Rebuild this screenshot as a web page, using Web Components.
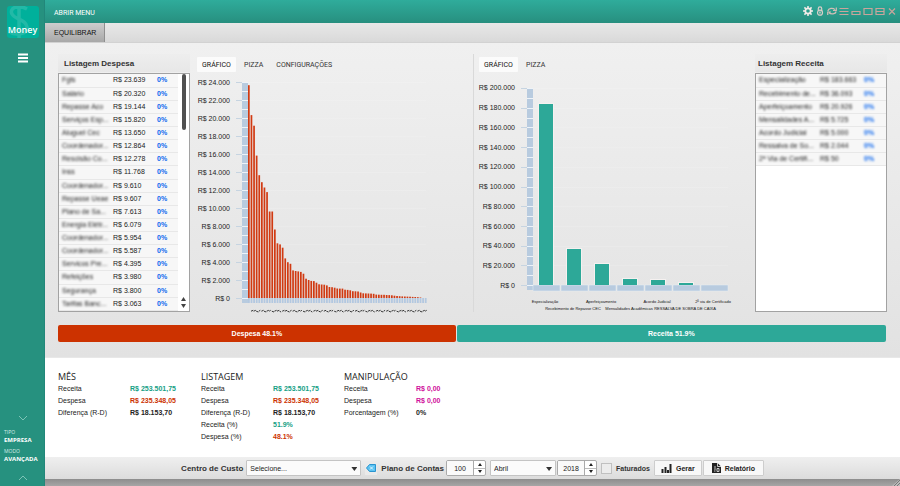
<!DOCTYPE html>
<html lang="pt-BR">
<head>
<meta charset="utf-8">
<title>Money - Equilibrar</title>
<style>
html, body { height: 100%; margin: 0; }
body { font-family: "Liberation Sans", Arial, sans-serif; font-size: 7px; color: #222; }
</style>
</head>
<body>
<money-app></money-app>
<script>
const BASE = `
*, *::before, *::after { box-sizing: border-box; }
button, input, select { font: inherit; color: inherit; margin: 0; padding: 0; border: 0; background: none; }
button { cursor: pointer; }
`;

class Base extends HTMLElement {
  connectedCallback() {
    if (this.shadowRoot) return;
    const t = document.createElement('template');
    t.innerHTML = `<style>${BASE}${this.css()}</style>${this.html()}`;
    this.attachShadow({ mode: 'open' }).append(t.content.cloneNode(true));
  }
  css() { return ''; }
  html() { return ''; }
}

class SideBar extends Base {
  css() { return `
:host { display: flex; flex-direction: column; align-items: center; width: 45px; flex: none; background: #26917f; color: #fff; font-family: "Open Sans", sans-serif; padding-top: 6px; box-shadow: inset -1px 0 #22877a; }
.logo { display: grid; width: 32px; height: 32px; border-radius: 3px; background: #00b09b; overflow: hidden; }
.logo > * { grid-area: 1 / 1; }
.logo span { align-self: end; justify-self: center; font-size: 9px; font-weight: 600; line-height: 17px; }
.menu { margin-top: 14px; width: 12px; height: 12px; display: block; }
svg { display: block; }
.foot { margin-top: auto; align-self: stretch; padding: 0 0 5px 4px; display: flex; flex-direction: column; }
.arrow { align-self: center; width: 10px; height: 6px; margin-right: 4px; }
dl { margin: 7px 0 9px; }
dt { font-size: 5px; line-height: 8px; color: #d5ebe6; }
dd { margin: 0 0 3px; font-size: 6px; line-height: 8px; font-weight: 700; }
`; }
  html() { return `
<div class="logo"><svg width="32" height="32" viewBox="0 0 32 32" aria-hidden="true"><path d="M20 3 C11-2 2 2 5 8 C8 14 19 13 20 21 C21 28 10 30 2 26 M12-2 V34" fill="none" stroke="#22b9a7" stroke-width="3.5"/></svg><span>Money</span></div>
<button class="menu" aria-label="Menu"><svg width="12" height="12" viewBox="0 0 12 12"><path d="M1 2.5h10M1 6h10M1 9.5h10" stroke="#fff" stroke-width="1.8"/></svg></button>
<div class="foot">
<button class="arrow" aria-label="Descer"><svg width="10" height="6"><path d="M1 1l4 4 4-4" fill="none" stroke="#7cc3b6"/></svg></button>
<dl><dt>TIPO</dt><dd>EMPRESA</dd><dt>MODO</dt><dd>AVANÇADA</dd></dl>
<button class="arrow" aria-label="Subir"><svg width="10" height="6"><path d="M1 5l4-4 4 4" fill="none" stroke="#7cc3b6"/></svg></button>
</div>`; }
}
customElements.define('side-bar', SideBar);

class TopBar extends Base {
  css() { return `
:host { display: flex; align-items: center; justify-content: space-between; height: 23px; flex: none; padding: 0 2px 2px 9px; background: linear-gradient(#2fac9b, #278f7f); color: #fff; font-family: Roboto, sans-serif; }
.open { line-height: 10px; padding-top: 4px; }
.tools { display: flex; }
.tools button { width: 12px; height: 12px; display: grid; place-items: center; }
svg { display: block; width: 10px; height: 10px; fill: none; stroke: #c9a59c; stroke-width: 1.2; }
`; }
  html() {
    const icons = {
      'Configurações': '<g stroke="#f3ece9"><circle cx="5" cy="5" r="2.7" stroke-width="1.8"/><path d="M5 0v2M5 8v2M0 5h2M8 5h2M1.4 1.4l1.5 1.5M7.1 7.1l1.5 1.5M1.4 8.6l1.5-1.5M7.1 2.9l1.5-1.5" stroke-width="1.5"/></g>',
      'Bloquear': '<path d="M3.3 5V2.5a1.7 1.7 0 0 1 3.4 0V5" stroke="#d9cfc9"/><circle cx="5" cy="6.7" r="2.5" stroke="#d9cfc9"/><path d="M5 5.6v2" stroke="#e8dcd8"/>',
      'Atualizar': '<path d="M.8 5C1.500 2 6 1.600 8 3.600M9.300 1.500v3H6M9.200 5.500C8.500 8.300 4 8.600 2 6.800M.7 9v-3H4" stroke="#d2beb6"/>',
      'Lista': '<path d="M.5 2.500h9M.5 5.500h9M.5 8.500h9"/>',
      'Minimizar': '<path d="M1 5.500h8v3H1z"/>',
      'Maximizar': '<path d="M1 2.500h8v6H1z"/>',
      'Dividir': '<path d="M1 2.500h8v6H1zM1 5.500h8"/>',
      'Fechar': '<path d="M2 2.500l6 6M8 2.500l-6 6"/>'
    };
    return `<button class="open">ABRIR MENU</button><div class="tools">${Object.entries(icons).map(([n, p]) => `<button aria-label="${n}"><svg viewBox="0 0 10 10">${p}</svg></button>`).join('')}</div>`;
  }
}
customElements.define('top-bar', TopBar);

class PageTabs extends Base {
  css() { return `
:host { display: flex; height: 20px; flex: none; background: linear-gradient(#e8e8e8, #d9d9d9); border-bottom: 1px solid #d2d2d2; }
button { padding: 0 8px 0 9px; background: linear-gradient(#cdcdcd, #a8a8a8); border-right: 1px solid #8f8f8f; color: #111; }
`; }
  html() { return `<button>EQUILIBRAR</button>`; }
}
customElements.define('page-tabs', PageTabs);

class EntryList extends Base {
  css() { return `
:host { display: flex; flex-direction: column; min-width: 0; }
h2 { margin: 0 0 1px; padding-left: 6px; font-size: 8px; line-height: 19px; height: 18px; font-weight: 700; color: #333; background: linear-gradient(#eeeeee, #e7e7e7); }
:host([plain]) h2 { padding-left: 3px; }
.box { flex: 1; display: flex; align-items: stretch; border: 1px solid #a2a2a2; background: #fff; min-height: 0; }
table { flex: 1; border-collapse: collapse; table-layout: fixed; min-width: 0; }
:host([plain]) table { align-self: flex-start; height: 92px; }
td { padding: 0; height: 13px; line-height: 10px; background: #f7f7f7; border-bottom: 1px solid #e8e8e8; white-space: nowrap; color: #222; }
td:first-child { width: 52px; padding-left: 3px; color: #222; }
td:nth-child(2) { width: 46px; padding-left: 2px; }
td:last-child { color: #0b66ee; font-weight: 700; }
:host([plain]) td:first-child { width: 62px; }
td span { display: block; }
.soft { filter: blur(1px); }
.scroll { width: 11px; display: flex; flex-direction: column; justify-content: space-between; align-items: center; }
.thumb { width: 4px; height: 56px; border-radius: 2px; background: #505050; }
svg { display: block; margin-bottom: 3px; }
`; }
  html() {
    const plain = this.hasAttribute('plain');
    const rows = this.getAttribute('rows').split(';').map(r => r.split('|'));
    const soft = plain ? ' class="soft"' : '';
    return `<h2><slot></slot></h2><div class="box"><table>${rows.map(([n, v]) => `<tr><td><span class="soft">${n}</span></td><td><span${soft}>R$ ${v}</span></td><td><span${soft}>0%</span></td></tr>`).join('')}</table>${plain ? '' : '<div class="scroll"><div class="thumb"></div><svg width="7" height="11"><path d="M1 4l2.500-4 2.500 4zM1 7h5l-2.500 4z" fill="#444"/></svg></div>'}</div>`;
  }
}
customElements.define('entry-list', EntryList);

class ChartTabs extends Base {
  css() { return `
:host { display: flex; font-family: Roboto, sans-serif; }
button { height: 15px; padding: 0 5px 0 8px; color: #333; border-radius: 1px; }
button:first-of-type { background: #fbfbfb; color: #111; width: 39px; padding: 0; }
`; }
  html() { return this.getAttribute('items').split(',').map((t, i) => `<button role="tab" aria-selected="${i === 0}">${t}</button>`).join(''); }
}
customElements.define('chart-tabs', ChartTabs);

const axisCss = `
.plot { display: flex; gap: 6px; }
ol { list-style: none; margin: 0; padding: 0; text-align: right; display: flex; flex-direction: column; white-space: nowrap; color: #222; }
li { flex: 1; display: flex; align-items: center; justify-content: flex-end; }
svg { flex: 1; min-width: 0; display: block; overflow: visible; }
`;
const yAxis = (top, bottom, steps, x, right) => {
  const step = (bottom - top) / steps;
  let s = `<rect x="${x}" y="${top}" width="6" height="${bottom - top + 5}" fill="#b8cbdf"/>`;
  for (let i = 0; i <= steps; i++) {
    const y = Math.round(top + i * step);
    s += `<rect x="0" y="${y}" width="${x}" height="1" fill="#c6d4e1"/><rect x="${x}" y="${y}" width="6" height="1" fill="#eef3f8"/>`;
    if (i < steps) s += `<rect x="${x}" y="${Math.round(y + step / 2)}" width="6" height="1" fill="#eef3f8"/><rect x="${x + 6}" y="${y}" width="${right - x - 6}" height="1" fill="#fff" opacity=".14"/>`;
  }
  return s;
};

class ExpenseChart extends Base {
  css() { return `
:host { display: block; padding: 3px 45px 0 7px; min-width: 0; }
.plot { margin-top: 1px; height: 234px; }
ol { width: 33px; }
${axisCss}`; }
  html() {
    const v = [23639,20320,19144,15820,13650,12864,12278,11768,9610,9607,7613,6079,5954,5587,4395,3980,3800,3063,3000,2950,2900,2700,2150,2000,1900,1880,1700,1520,1500,1480,1400,1220,1200,1150,1060,1050,1040,920,900,860,760,740,720,610,520,510,500,490,470,380,370,360,350,330,320,300,260,220,200,180,170,160,140,120,110,90,60,0,0];
    let s = yAxis(9, 225, 12, 6, 190);
    v.forEach((n, i) => {
      const x = 12 + i * 2.6, h = n * 216 / 24000;
      s += `<rect x="${x.toFixed(1)}" y="${(225 - h).toFixed(1)}" width="1.7" height="${h.toFixed(1)}" fill="#d13a12"/><rect x="${x.toFixed(1)}" y="225" width="1.8" height="5" fill="#b3c8e0"/>`;
      if (i) s += `<path d="M${(x + .4).toFixed(1)} 238.2l${i % 4 ? 2.2 : 1.5} ${i % 3 ? -.9 : .8}" stroke="#222" stroke-width=".9"/>`;
    });
    const labels = [];
    for (let n = 24; n >= 0; n -= 2) labels.push(`<li>R$ ${n ? n + '.000' : 0}</li>`);
    return `<chart-tabs items="GRÁFICO,PIZZA,CONFIGURAÇÕES"></chart-tabs><div class="plot"><ol>${labels.join('')}</ol><svg viewBox="0 0 192 234" preserveAspectRatio="none" role="img" aria-label="Despesas">${s}</svg></div>`;
  }
}
customElements.define('expense-chart', ExpenseChart);

class IncomeChart extends Base {
  css() { return `
:host { display: block; padding: 3px 27px 0 5px; min-width: 0; border-left: 1px solid #d9d9d9; }
.plot { margin-top: 6px; height: 217px; }
ol { width: 36px; }
.names { display: grid; grid-template-columns: repeat(7, minmax(0, 1fr)); margin: 3px 1px 0 52px; font-size: 4px; line-height: 7px; color: #111; }
.names span { justify-self: center; white-space: nowrap; }
.names span:nth-child(even) { margin-top: 7px; }
${axisCss}`; }
  html() {
    const v = [183663,36093,20926,5725,5000,2044,50];
    let s = yAxis(10, 207, 10, 6, 207);
    v.forEach((n, i) => {
      const x = 12 + i * 28, h = Math.round(n * 197 / 200000);
      s += `<rect x="${x}" y="207" width="27" height="6" fill="#b8cbdf" stroke="#e8eef4" stroke-width=".5"/>`;
      if (h) s += `<rect x="${x + 5}" y="${206 - h}" width="16" height="${h + 1}" fill="#f5f1f0"/><rect x="${x + 6}" y="${207 - h}" width="14" height="${h}" fill="#2da898"/>`;
    });
    const labels = [];
    for (let n = 200; n >= 0; n -= 20) labels.push(`<li>R$ ${n ? n + '.000' : 0}</li>`);
    const names = ['Especialização','Recebimento de Repasse CEC','Aperfeiçoamento','Mensalidades Acadêmicas','Acordo Judicial','RESSALVA DE SOBRA DE CAIXA','2ª via de Certificado'];
    return `<chart-tabs items="GRÁFICO,PIZZA"></chart-tabs><div class="plot"><ol>${labels.join('')}</ol><svg viewBox="0 0 207 217" preserveAspectRatio="none" role="img" aria-label="Receitas">${s}</svg></div><div class="names">${names.map(n => `<span>${n}</span>`).join('')}</div>`;
  }
}
customElements.define('income-chart', IncomeChart);

class BalanceBar extends Base {
  css() { return `
:host { display: flex; gap: 1px; color: #fff; font-weight: 700; line-height: 17px; text-align: center; }
div { border-radius: 2px; }
.out { flex: 481; background: #cc3200; }
.in { flex: 519; background: #2da898; }
`; }
  html() { return `<div class="out">Despesa 48.1%</div><div class="in">Receita 51.9%</div>`; }
}
customElements.define('balance-bar', BalanceBar);

class SummaryBlock extends Base {
  css() { return `
:host { display: block; width: 143px; }
h3 { margin: 0; font: 400 9px/13px "Open Sans", sans-serif; color: #222; }
dl { margin: 0; display: grid; grid-template-columns: 72px 1fr; line-height: 12px; }
dd { margin: 0; font-weight: 700; }
.g { color: #16a085; } .r { color: #cc3200; } .m { color: #d0109c; }
`; }
  html() {
    return `<h3><slot></slot></h3><dl>${this.getAttribute('rows').split(';').map(r => { const [k, v, c] = r.split('|'); return `<dt>${k}</dt><dd class="${c}">${v}</dd>`; }).join('')}</dl>`;
  }
}
customElements.define('summary-block', SummaryBlock);

class FilterBar extends Base {
  css() { return `
:host { display: flex; align-items: center; justify-content: center; height: 22px; flex: none; background: linear-gradient(#efefef, #dcdcdc); }
label { font-size: 8px; font-weight: 700; white-space: nowrap; color: #333; }
.pick { position: relative; display: block; height: 16px; border: 1px solid #c4c4c4; background: #fbfbfb; border-radius: 1px; }
.pick::after { content: ""; position: absolute; right: 3px; top: 6px; width: 6px; height: 4px; background: #333; clip-path: polygon(0 0, 100% 0, 50% 100%); pointer-events: none; }
select { appearance: none; display: block; width: 100%; height: 14px; padding-left: 3px; }
.cc { width: 115px; margin-left: 3px; }
.month { width: 66px; margin: 0 1px 0 4px; }
.clear { width: 12px; height: 14px; margin: 0 4px; display: grid; place-items: center; background: #eaeaea; }
.num { display: flex; height: 16px; width: 40px; border: 1px solid #aaa; border-radius: 2px; background: #fff; overflow: hidden; }
.plan { margin-left: 2px; }
input[type=number] { appearance: textfield; flex: 1; min-width: 0; text-align: center; background: #fafafa; }
input::-webkit-inner-spin-button { appearance: none; display: none; }
.spin { width: 12px; display: flex; flex-direction: column; border-left: 1px solid #aaa; }
.spin button { flex: 1; display: grid; place-items: center; }
.spin button + button { border-top: 1px solid #bbb; }
.spin svg { width: 4px; height: 3px; }
svg { display: block; }
input[type=checkbox] { appearance: none; width: 11px; height: 11px; border: 1px solid #c0c0c0; background: #ececec; margin: 0 4px 0 4px; }
.check { font-size: 7px; }
.go { display: flex; align-items: center; justify-content: center; gap: 4px; height: 16px; border: 1px solid #cdcdcd; background: #f8f8f8; border-radius: 1px; font-weight: 700; color: #222; width: 48px; margin-left: 4px; }
.rep { width: 61px; margin-left: 1px; }
`; }
  html() {
    const spin = `<span class="spin"><button aria-label="Aumentar"><svg viewBox="0 0 4 3"><path d="M0 3l2-3 2 3z" fill="#222"/></svg></button><button aria-label="Diminuir"><svg viewBox="0 0 4 3"><path d="M0 0h4l-2 3z" fill="#222"/></svg></button></span>`;
    return `
<label for="cc">Centro de Custo</label>
<span class="pick cc"><select id="cc"><option>Selecione...</option></select></span>
<button class="clear" aria-label="Limpar"><svg width="10" height="8"><path d="M.5 4l3-3.500h6v7h-6z" fill="#5cc3f2" stroke="#2a94cf"/><path d="M4 2.500l3 3M7 2.500l-3 3" stroke="#e6f7ff"/></svg></button>
<label for="pl">Plano de Contas</label>
<span class="num plan"><input id="pl" type="number" value="100">${spin}</span>
<span class="pick month"><select aria-label="Mês"><option>Abril</option></select></span>
<span class="num"><input type="number" aria-label="Ano" value="2018">${spin}</span>
<input type="checkbox" id="ft"><label class="check" for="ft">Faturados</label>
<button class="go"><svg width="11" height="10"><path d="M1.500 6v4M4.500 4v6M7 7v3M9.500 1v9" stroke="#222" stroke-width="2"/></svg>Gerar</button>
<button class="go rep"><svg width="9" height="10"><path d="M0 0h5.500L9 3.500V10H0z" fill="#222"/><path d="M5.500 0v3.500H9M2 4h2M2 6h2M5 5.500h2v3H5zM2 8h1.500" fill="none" stroke="#eee" stroke-width=".8"/></svg>Relatório</button>`;
  }
}
customElements.define('filter-bar', FilterBar);

class MoneyApp extends Base {
  css() { return `
:host { display: flex; min-height: 100vh; background: #fff; }
main { flex: 1; min-width: 0; display: flex; flex-direction: column; }
.panel { flex: none; padding: 11px 13px 15px; background: linear-gradient(#f0f0f0, #e2e2e2); }
.cols { display: grid; grid-template-columns: 132px minmax(0, 283fr) minmax(0, 282fr) 132px; height: 257px; }
balance-bar { margin: 14px 1px 0 0; }
.sum { flex: 1; display: flex; padding: 12px 13px 0; border-top: 1px solid #e8e8e8; }
.edge { height: 7px; flex: none; display: flex; justify-content: flex-end; background: linear-gradient(#8d8d8d, #a6a6a6); }
.edge svg { display: block; }
`; }
  html() { return `
<side-bar></side-bar>
<main>
<top-bar></top-bar>
<page-tabs></page-tabs>
<section class="panel">
<div class="cols">
<entry-list rows="Fgts|23.639;Salário|20.320;Repasse Aco|19.144;Serviços Esp...|15.820;Aluguel Cec|13.650;Coordenador...|12.864;Rescisão Co...|12.278;Inss|11.768;Coordenador...|9.610;Repasse Ueae|9.607;Plano de Sa...|7.613;Energia Elétr...|6.079;Coordenador...|5.954;Coordenador...|5.587;Servicos Pre...|4.395;Refeições|3.980;Segurança|3.800;Tarifas Banc...|3.063">Listagem Despesa</entry-list>
<expense-chart></expense-chart>
<income-chart></income-chart>
<entry-list plain rows="Especialização|183.663;Recebimento de...|36.093;Aperfeiçoamento|20.926;Mensalidades A...|5.725;Acordo Judicial|5.000;Ressalva de So...|2.044;2ª Via de Certifi...|50">Listagem Receita</entry-list>
</div>
<balance-bar></balance-bar>
</section>
<section class="sum">
<summary-block rows="Receita|R$ 253.501,75|g;Despesa|R$ 235.348,05|r;Diferença (R-D)|R$ 18.153,70|">MÊS</summary-block>
<summary-block rows="Receita|R$ 253.501,75|g;Despesa|R$ 235.348,05|r;Diferença (R-D)|R$ 18.153,70|;Receita (%)|51.9%|g;Despesa (%)|48.1%|r">LISTAGEM</summary-block>
<summary-block rows="Receita|R$ 0,00|m;Despesa|R$ 0,00|m;Porcentagem (%)|0%|">MANIPULAÇÃO</summary-block>
</section>
<filter-bar></filter-bar>
<div class="edge"><svg width="8" height="7"><path d="M8 0v7H0z" fill="#bbb"/><path d="M2 7l6-6M5 7l3-3" stroke="#777"/></svg></div>
</main>`; }
}
customElements.define('money-app', MoneyApp);
</script>
</body>
</html>
